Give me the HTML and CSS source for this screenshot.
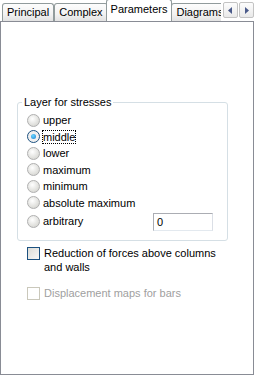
FILE: index.html
```html
<!DOCTYPE html>
<html lang="en">
<head>
  <meta charset="UTF-8">
  <title>Parameters</title>
  <link rel="stylesheet" href="styles.css">
</head>
<body>
  <div class="window">
    <div class="tabs">
      <div class="tab">Principal</div>
      <div class="tab">Complex</div>
      <div class="tab active">Parameters</div>
      <div class="tab">Diagrams</div>
      <div class="scroll">
        <div class="arrow"><svg width="5" height="7" viewBox="0 0 5 7"><path d="M4 0v7L0 3.5z" fill="#4a5a8a"/></svg></div>
        <div class="arrow"><svg width="5" height="7" viewBox="0 0 5 7"><path d="M1 0v7l4-3.5z" fill="#4a5a8a"/></svg></div>
      </div>
    </div>
    <div class="panel">
      <fieldset class="group">
        <legend>Layer for stresses</legend>
        <label class="radio"><span class="dot"></span>upper</label>
        <label class="radio checked"><span class="dot"></span><span class="focus">middle</span></label>
        <label class="radio"><span class="dot"></span>lower</label>
        <label class="radio"><span class="dot"></span>maximum</label>
        <label class="radio"><span class="dot"></span>minimum</label>
        <label class="radio"><span class="dot"></span>absolute maximum</label>
        <div class="last-row">
          <label class="radio"><span class="dot"></span>arbitrary</label>
          <div class="field">0</div>
        </div>
      </fieldset>
      <label class="check"><span class="box"></span><span>Reduction of forces above columns<br>and walls</span></label>
      <label class="check disabled"><span class="box"></span><span>Displacement maps for bars</span></label>
    </div>
  </div>
</body>
</html>
```

FILE: styles.css
```css
body {
  margin: 0;
  background: #fff;
  font-family: Tahoma, "Liberation Sans", Arial, sans-serif;
  font-size: 11px;
  color: #000;
}

.window {
  width: 254px;
  height: 375px;
  display: flex;
  flex-direction: column;
}

.tabs {
  display: flex;
  align-items: flex-end;
  height: 21px;
  padding-left: 2px;
  position: relative;
  z-index: 1;
  overflow: hidden;
}

.tab {
  height: 17px;
  line-height: 17px;
  padding: 0 4px;
  border: 1px solid #919b9c;
  border-bottom: none;
  border-radius: 3px 3px 0 0;
  background: linear-gradient(#fdfdfd, #f2f2f2 60%, #e2e2e2);
  white-space: nowrap;
  flex: none;
}

.tab.active {
  height: 21px;
  line-height: 19px;
  padding: 0 4px 1px;
  margin: 0 -1px -1px -2px;
  background: #fff;
  position: relative;
}

.scroll {
  position: absolute;
  right: 0;
  top: 0;
  height: 21px;
  padding: 2px 0 0 2px;
  box-sizing: border-box;
  background: #fff;
  display: flex;
  gap: 1px;
}

.arrow {
  width: 15px;
  height: 16px;
  border: 1px solid #c3c3c3;
  border-radius: 2px;
  background: linear-gradient(#fdfdfd, #e9e9e9);
  display: flex;
  align-items: center;
  justify-content: center;
  box-sizing: border-box;
}

.panel {
  flex: 1;
  border: 1px solid #898c95;
  padding: 74px 26px 0 16px;
}

.group {
  margin: 0;
  width: 211px;
  box-sizing: border-box;
  border: 1px solid #d5dfe5;
  border-radius: 3px;
  padding: 4px 0 9px 9px;
  height: 145px;
}

.group legend {
  padding: 0 2px;
  margin-left: -5px;
}

.radio {
  display: flex;
  align-items: center;
  height: 16.5px;
  gap: 3px;
}

.dot {
  width: 11px;
  height: 11px;
  border-radius: 50%;
  border: 1px solid #b0b0b0;
  background: radial-gradient(circle at 40% 35%, #fff, #dcdcd8 70%, #c8c8c4);
  display: flex;
  align-items: center;
  justify-content: center;
}

.checked .dot {
  border-color: #1c5180;
  background: #f0f0f0;
}

.checked .dot::after {
  content: "";
  width: 5px;
  height: 5px;
  border-radius: 50%;
  background: radial-gradient(circle at 40% 35%, #6ad6ff, #1a7fd0);
}

.focus {
  outline: 1px dotted #000;
  outline-offset: 0;
}

.last-row {
  display: flex;
  align-items: center;
  justify-content: space-between;
  padding-right: 14px;
}

.field {
  width: 60px;
  height: 18px;
  box-sizing: border-box;
  border: 1px solid #abadb3;
  border-right-color: #dbdfe6;
  border-bottom-color: #e3e9ef;
  padding: 1px 3px;
  line-height: 15px;
  margin-top: 2px;
}

.check {
  display: flex;
  align-items: flex-start;
  gap: 4px;
  margin: 5px 0 0 10px;
  line-height: 14px;
}

.check .box {
  width: 11px;
  height: 11px;
  border: 1px solid #1c5180;
  background: linear-gradient(135deg, #dcdcd7, #f8f8f7);
  flex: none;
  margin-top: 1px;
}

.check.disabled {
  margin-top: 12px;
  color: #a0a0a0;
}

.check.disabled .box {
  border-color: #cac8bb;
  background: #fff;
}
```
